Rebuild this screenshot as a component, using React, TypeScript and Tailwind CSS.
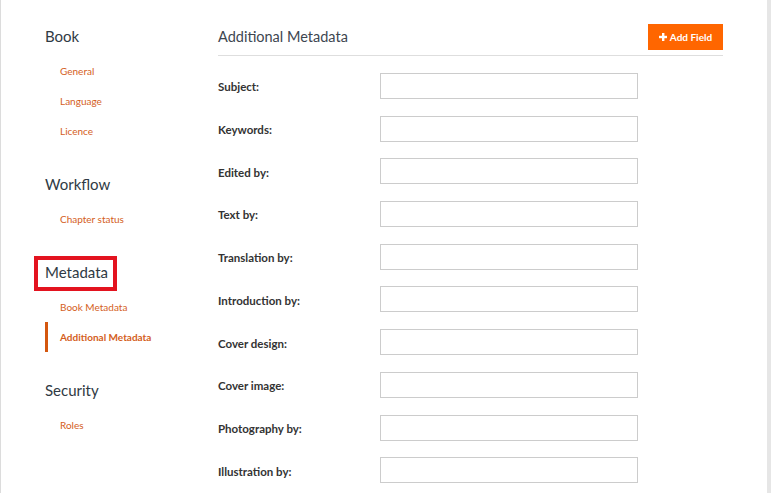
import React from 'react';

const sections = [
  { title: 'Book', links: [{ label: 'General' }, { label: 'Language' }, { label: 'Licence' }] },
  { title: 'Workflow', links: [{ label: 'Chapter status' }] },
  { title: 'Metadata', marked: true, links: [{ label: 'Book Metadata' }, { label: 'Additional Metadata', active: true }] },
  { title: 'Security', links: [{ label: 'Roles' }] },
];

const fields = [
  'Subject:',
  'Keywords:',
  'Edited by:',
  'Text by:',
  'Translation by:',
  'Introduction by:',
  'Cover design:',
  'Cover image:',
  'Photography by:',
  'Illustration by:',
];

const PlusIcon = () => (
  <svg width="8" height="8" viewBox="0 0 8 8" className="mr-[3px]">
    <rect x="3" y="0" width="2.4" height="8" fill="white" />
    <rect x="0" y="2.8" width="8" height="2.4" fill="white" />
  </svg>
);

const App: React.FC = () => {
  return (
    <div className="flex w-[771px] h-[493px] bg-white overflow-hidden font-['Lato','Open_Sans',sans-serif]">
      {/* left edge */}
      <div className="w-px bg-[#dcdcdc] shrink-0" />

      {/* Sidebar */}
      <div className="w-[217px] shrink-0 pl-[44px] pt-[26px]">
        {sections.map((section, i) => (
          <div key={section.title} className={i > 0 ? 'mt-[28px]' : ''}>
            <div className="relative h-[20px] flex items-center">
              <h3 className="text-[15px] leading-[20px] text-[#2f3a44]">{section.title}</h3>
              {section.marked && (
                <span className="absolute left-[-11px] top-[-6px] w-[83px] h-[35px] border-[4px] border-[#e3131f]" />
              )}
            </div>
            <div className="mt-[10px]">
              {section.links.map((link) => (
                <div key={link.label} className="relative h-[30px] flex items-center pl-[15px] pt-px">
                  {link.active && <span className="absolute left-0 top-0 bottom-0 w-[3px] bg-[#d4570f]" />}
                  <span className={`text-[10px] text-[#d4601c] ${link.active ? 'font-bold' : ''}`}>{link.label}</span>
                </div>
              ))}
            </div>
          </div>
        ))}
      </div>

      {/* Main */}
      <div className="w-[505px] shrink-0 pt-[24px]">
        <div className="flex items-center justify-between pb-[5px] border-b border-[#dedede]">
          <h2 className="text-[14.5px] text-[#3d4650]">Additional Metadata</h2>
          <button className="flex items-center h-[26px] w-[75px] justify-center bg-[#ff6600] text-white text-[10px] font-bold">
            <PlusIcon />
            Add Field
          </button>
        </div>
        <div className="flex flex-col gap-[16.7px] pt-[17px]">
          {fields.map((field) => (
            <div key={field} className="flex items-center h-[26px]">
              <label className="w-[162px] text-[11.5px] font-bold text-[#333] pt-[2px]">{field}</label>
              <input className="w-[258px] h-[26px] border border-[#cccccc] bg-white outline-none" />
            </div>
          ))}
        </div>
      </div>

      <div className="flex-1" />
      {/* scrollbar strip */}
      <div className="w-[4px] shrink-0 bg-[#e6e6e6]" />
    </div>
  );
};

export default App;
